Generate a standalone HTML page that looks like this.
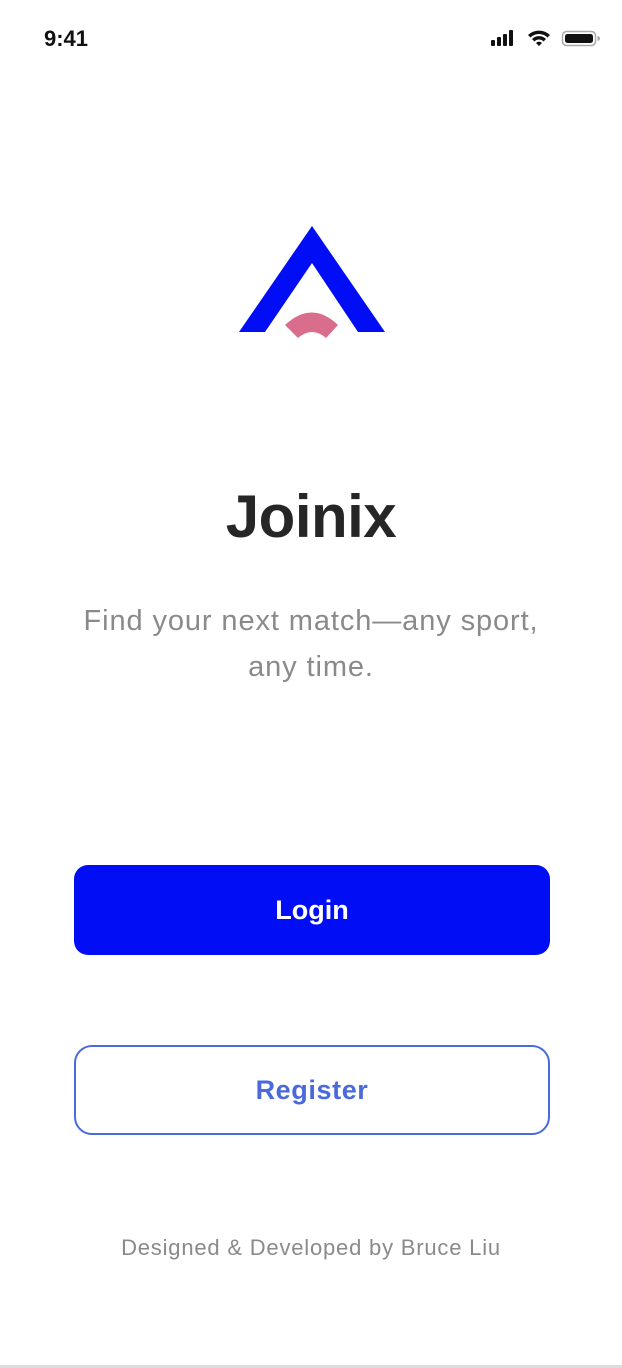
<!DOCTYPE html>
<html><head><meta charset="utf-8"><style>
*{margin:0;padding:0;box-sizing:border-box}
body{width:622px;height:1368px;background:#fff;font-family:"Liberation Sans",sans-serif;position:relative;overflow:hidden}
.abs{position:absolute}
.time{left:44px;top:26px;font-size:22px;font-weight:bold;color:#111}
.title{left:0;width:622px;top:482px;text-align:center;font-size:60px;font-weight:bold;color:#262626;letter-spacing:-0.5px}
.sub{left:0;width:622px;top:598px;text-align:center;font-size:29px;letter-spacing:0.9px;line-height:46px;color:#8a8a8a}
.login{left:74px;top:865px;width:476px;height:90px;background:#000df5;border-radius:14px;color:#fff;font-size:27px;font-weight:bold;text-align:center;line-height:90px}
.reg{left:74px;top:1045px;width:476px;height:90px;border:2px solid #4b6ade;border-radius:18px;color:#4a69dc;font-size:27px;font-weight:bold;text-align:center;line-height:86px;letter-spacing:0.6px}
.foot{left:0;width:622px;top:1235px;text-align:center;font-size:22px;letter-spacing:0.8px;color:#8a8a8a}
.line{left:0;top:1365px;width:622px;height:3px;background:#dcdce0}
</style></head><body>
<div class="abs time">9:41</div>
<svg class="abs" style="left:488px;top:28px" width="112" height="22" viewBox="0 0 112 22">
<rect x="3" y="12" width="4" height="6" rx="1" fill="#111"/>
<rect x="9" y="9" width="4" height="9" rx="1" fill="#111"/>
<rect x="15" y="6" width="4" height="12" rx="1" fill="#111"/>
<rect x="21" y="2" width="4" height="16" rx="1" fill="#111"/>
<path d="M40 7a16 16 0 0 1 22 0l-2.5 2.5a12 12 0 0 0-17 0z M44 11a10 10 0 0 1 14 0l-2.5 2.5a6 6 0 0 0-9 0z M48 15a4 4 0 0 1 6 0l-3 3z" fill="#111"/>
<rect x="74.5" y="3.5" width="33" height="14" rx="4" fill="none" stroke="#aaa" stroke-width="1.5"/>
<rect x="77" y="6" width="28" height="9" rx="2.5" fill="#111"/>
<path d="M109.5 8v5a2.5 2.5 0 0 0 0-5z" fill="#aaa"/>
</svg>
<svg class="abs" style="left:0;top:0" width="622" height="360">
<path d="M312 226 L385 332 L358 332 L312 263 L265 332 L239 332 Z" fill="#000df5"/>
<path d="M285 325 Q312 300 338 325 L326 338 Q312 326 298 338 Z" fill="#d86e8c"/>
</svg>
<div class="abs title">Joinix</div>
<div class="abs sub">Find your next match—any sport,<br>any time.</div>
<div class="abs login">Login</div>
<div class="abs reg">Register</div>
<div class="abs foot">Designed &amp; Developed by Bruce Liu</div>
<div class="abs line"></div>
</body></html>
